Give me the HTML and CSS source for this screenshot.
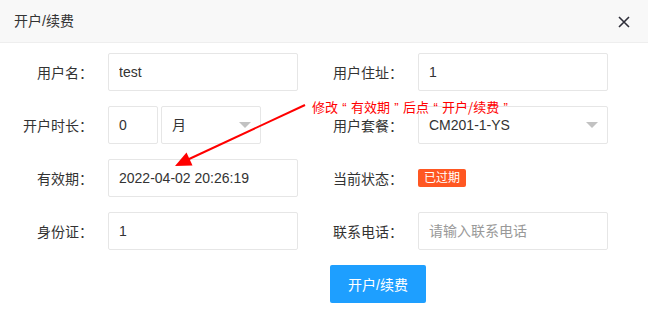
FILE: index.html
```html
<!DOCTYPE html>
<html lang="zh-CN">
<head>
  <meta charset="UTF-8">
  <title>开户/续费</title>
  <link rel="stylesheet" href="styles.css">
</head>
<body>
  <div class="layer">
    <div class="layer-title">
      开户/续费
      <svg class="layer-close" width="12" height="12" viewBox="0 0 12 12">
        <path d="M1 1L11 11M11 1L1 11" stroke="#2f2f3a" stroke-width="1.6" fill="none"/>
      </svg>
    </div>

    <form class="form">
      <div class="row">
        <div class="item">
          <label>用户名：</label>
          <input class="input" value="test">
        </div>
        <div class="item">
          <label>用户住址：</label>
          <input class="input" value="1">
        </div>
      </div>

      <div class="row">
        <div class="item">
          <label>开户时长：</label>
          <input class="input input-short" value="0">
          <div class="input select select-short">月</div>
        </div>
        <div class="item">
          <label>用户套餐：</label>
          <div class="input select">CM201-1-YS</div>
        </div>
      </div>

      <div class="row">
        <div class="item">
          <label>有效期：</label>
          <input class="input" value="2022-04-02 20:26:19">
        </div>
        <div class="item">
          <label>当前状态：</label>
          <span class="badge">已过期</span>
        </div>
      </div>

      <div class="row">
        <div class="item">
          <label>身份证：</label>
          <input class="input" value="1">
        </div>
        <div class="item">
          <label>联系电话：</label>
          <input class="input" placeholder="请输入联系电话">
        </div>
      </div>

      <div class="actions">
        <button type="button" class="btn">开户/续费</button>
      </div>
    </form>

    <!-- annotation drawn over the form -->
    <div class="note">
      <svg class="note-arrow" width="648" height="317" viewBox="0 0 648 317">
        <line x1="305" y1="105" x2="187" y2="160" stroke="#f00" stroke-width="2"/>
        <polygon points="175,166 192.5,165.5 186.5,152.5" fill="#f00"/>
      </svg>
      <span class="note-text">修改<span class="q">“</span>有效期<span class="q">”</span>后点<span class="q">“</span>开户/续费<span class="q">”</span></span>
    </div>
  </div>
</body>
</html>
```

FILE: styles.css
```css
body {
  margin: 0;
  background: #fff;
  font-family: "Liberation Sans", "Noto Sans CJK SC", sans-serif;
  font-size: 14px;
  color: #333;
}
.layer {
  position: relative;
  width: 648px;
  height: 317px;
  overflow: hidden;
}
.layer-title {
  height: 42px;
  line-height: 42px;
  padding-left: 14px;
  background: #f8f8f8;
  border-bottom: 1px solid #eee;
  color: #333;
  display: flex;
  align-items: center;
  justify-content: space-between;
  padding-right: 18px;
}
.layer-close {
  margin-top: 1px;
}
.form {
  padding-top: 10px;
}
.row {
  display: grid;
  grid-template-columns: 310px 310px;
  margin-bottom: 15px;
}
.item {
  display: flex;
  align-items: center;
  height: 38px;
}
.item label {
  width: 93px;
  padding-right: 15px;
  text-align: right;
  color: #333;
}
.input {
  box-sizing: border-box;
  width: 190px;
  height: 38px;
  line-height: 36px;
  padding: 0 10px;
  border: 1px solid #e6e6e6;
  border-radius: 2px;
  background: #fff;
  font-family: inherit;
  font-size: 14px;
  color: #333;
  outline: none;
}
.input::placeholder {
  color: #999;
}
.input-short {
  width: 50px;
}
.select {
  position: relative;
}
.select::after {
  content: "";
  position: absolute;
  right: 9px;
  top: 50%;
  margin-top: -3px;
  border-style: solid;
  border-width: 6px 6px 0;
  border-color: #c2c2c2 transparent transparent;
}
.select-short {
  width: 100px;
  margin-left: 3px;
}
.badge {
  display: inline-block;
  height: 18px;
  line-height: 18px;
  padding: 0 6px;
  border-radius: 2px;
  background: #ff5722;
  color: #fff;
  font-size: 12px;
}
.actions {
  padding-left: 330px;
}
.btn {
  height: 38px;
  padding: 0 18px;
  border: none;
  border-radius: 2px;
  background: #1e9fff;
  color: #fff;
  font-family: inherit;
  font-size: 14px;
  cursor: pointer;
}
.note {
  position: absolute;
  left: 0;
  top: 0;
  width: 648px;
  height: 317px;
  pointer-events: none;
}
.note-arrow {
  position: absolute;
  left: 0;
  top: 0;
}
.note-text {
  position: absolute;
  left: 312px;
  top: 97px;
  font-size: 13px;
  color: #f00;
  font-family: "Noto Sans CJK SC", sans-serif;
  white-space: nowrap;
}
.note-text .q {
  display: inline-block;
  width: 13px;
  text-align: center;
  font-family: "Liberation Sans", sans-serif;
}
```
